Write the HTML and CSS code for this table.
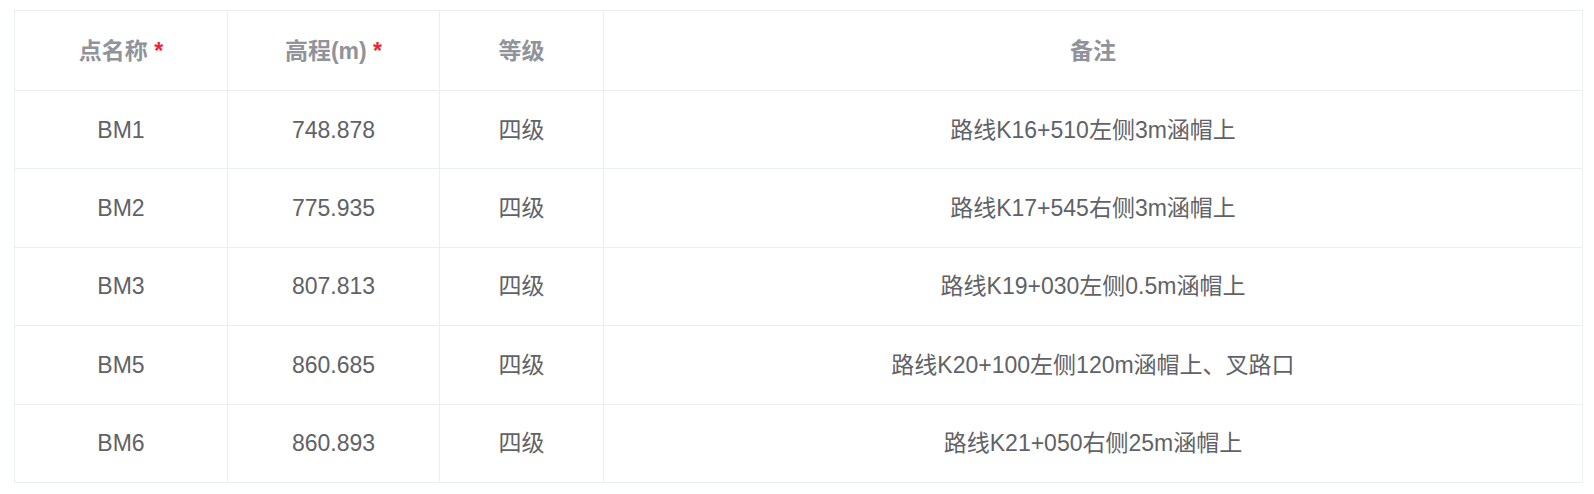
FILE: index.html
```html
<!DOCTYPE html>
<html lang="zh-CN">
<head>
<meta charset="utf-8">
<title>水准点表</title>
<link rel="stylesheet" href="styles.css">
</head>
<body>
<div class="wrap">
  <table class="grid">
    <colgroup>
      <col class="c1"><col class="c2"><col class="c3"><col class="c4">
    </colgroup>
    <thead>
      <tr>
        <th>点名称 <span class="req">*</span></th>
        <th>高程(m) <span class="req">*</span></th>
        <th>等级</th>
        <th>备注</th>
      </tr>
    </thead>
    <tbody>
      <tr><td>BM1</td><td>748.878</td><td>四级</td><td>路线K16+510左侧3m涵帽上</td></tr>
      <tr><td>BM2</td><td>775.935</td><td>四级</td><td>路线K17+545右侧3m涵帽上</td></tr>
      <tr><td>BM3</td><td>807.813</td><td>四级</td><td>路线K19+030左侧0.5m涵帽上</td></tr>
      <tr><td>BM5</td><td>860.685</td><td>四级</td><td>路线K20+100左侧120m涵帽上、叉路口</td></tr>
      <tr><td>BM6</td><td>860.893</td><td>四级</td><td>路线K21+050右侧25m涵帽上</td></tr>
    </tbody>
  </table>
</div>
</body>
</html>
```
FILE: styles.css
```css
html, body {
  margin: 0;
  padding: 0;
  background: #ffffff;
}
.wrap {
  padding: 10px 11px 10px 14px;
}
.grid {
  width: 100%;
  border-collapse: collapse;
  table-layout: fixed;
  font-family: "Liberation Sans", "Noto Sans CJK SC", sans-serif;
  font-size: 23px;
}
.c1 { width: 213px; }
.c2 { width: 212px; }
.c3 { width: 164px; }
.grid th,
.grid td {
  border: 1px solid #ebeef5;
  text-align: center;
  vertical-align: middle;
  padding: 0;
  line-height: 26px;
}
.grid th {
  height: 79px;
  color: #909399;
  font-weight: bold;
}
.grid td {
  height: 77.4px;
  color: #606266;
  font-weight: normal;
}
.req {
  color: #f5222d;
  font-weight: bold;
}
```
